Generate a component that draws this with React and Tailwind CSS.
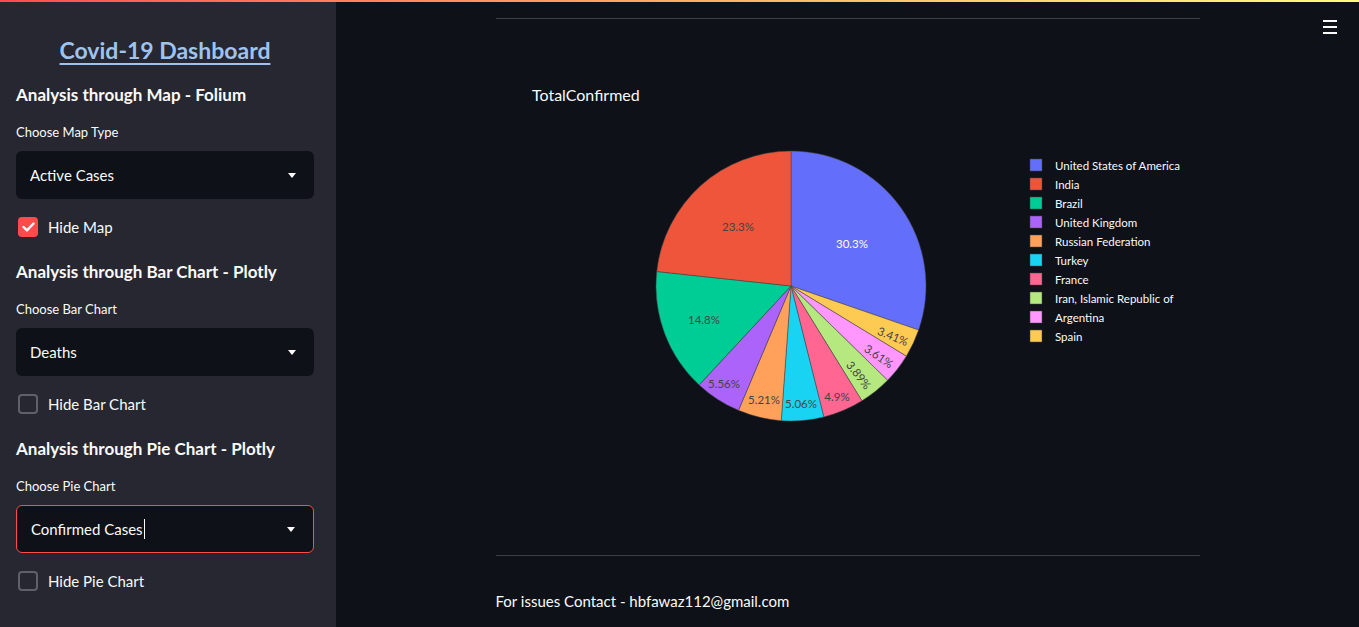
import { useState } from "react";

const slices = [
  { name: "United States of America", value: 30.3, color: "#636efa", label: "30.3%", lx: 356, ly: 224, rot: 0, light: true },
  { name: "Spain", value: 3.41, color: "#fecb52", label: "3.41%", lx: 397, ly: 317, rot: 22 },
  { name: "Argentina", value: 3.61, color: "#ff97ff", label: "3.61%", lx: 383, ly: 337, rot: 34 },
  { name: "Iran, Islamic Republic of", value: 3.89, color: "#b6e880", label: "3.89%", lx: 363, ly: 356, rot: 52 },
  { name: "France", value: 4.9, color: "#ff6692", label: "4.9%", lx: 341, ly: 377, rot: 0 },
  { name: "Turkey", value: 5.06, color: "#19d3f3", label: "5.06%", lx: 305, ly: 384, rot: 0 },
  { name: "Russian Federation", value: 5.21, color: "#ffa15a", label: "5.21%", lx: 268, ly: 380, rot: 0 },
  { name: "United Kingdom", value: 5.56, color: "#ab63fa", label: "5.56%", lx: 228, ly: 364, rot: 0 },
  { name: "Brazil", value: 14.8, color: "#00cc96", label: "14.8%", lx: 208, ly: 300, rot: 0 },
  { name: "India", value: 23.3, color: "#ef553b", label: "23.3%", lx: 242, ly: 207, rot: 0 },
];

const legend = [
  "United States of America",
  "India",
  "Brazil",
  "United Kingdom",
  "Russian Federation",
  "Turkey",
  "France",
  "Iran, Islamic Republic of",
  "Argentina",
  "Spain",
];

const FONT = "font-['Lato','Noto_Sans',sans-serif]";

function PieChart() {
  const cx = 295;
  const cy = 267;
  const r = 135;
  const total = slices.reduce((s, d) => s + d.value, 0);
  let acc = 0;
  const pt = (a) => [cx + r * Math.sin(a), cy - r * Math.cos(a)];
  return (
    <svg width="704" height="536" viewBox="0 0 704 536" className="block">
      <text x="36" y="82" fill="#fafafa" fontSize="16" fontFamily="Lato, 'Noto Sans', sans-serif">
        TotalConfirmed
      </text>
      {slices.map((s) => {
        const a0 = (acc / total) * Math.PI * 2;
        acc += s.value;
        const a1 = (acc / total) * Math.PI * 2;
        const [x0, y0] = pt(a0);
        const [x1, y1] = pt(a1);
        const large = a1 - a0 > Math.PI ? 1 : 0;
        return (
          <path
            key={s.name}
            d={`M${cx},${cy} L${x0},${y0} A${r},${r} 0 ${large} 1 ${x1},${y1} Z`}
            fill={s.color}
            stroke="#444"
            strokeWidth="0.5"
          />
        );
      })}
      {slices.map((s) => (
        <text
          key={s.label}
          x={s.lx}
          y={s.ly}
          textAnchor="middle"
          dominantBaseline="central"
          fontSize="11.5"
          fontFamily="Lato, 'Noto Sans', sans-serif"
          fill={s.light ? "#ffffff" : "#444444"}
          transform={s.rot ? `rotate(${s.rot} ${s.lx} ${s.ly})` : undefined}
        >
          {s.label}
        </text>
      ))}
      {legend.map((n, i) => {
        const c = slices.find((s) => s.name === n).color;
        const y = 146 + i * 19;
        return (
          <g key={n}>
            <rect x="534" y={y - 6} width="12" height="12" fill={c} stroke="#444" strokeWidth="0.5" />
            <text x="559" y={y} dominantBaseline="central" fontSize="11.5" fill="#fafafa" fontFamily="Lato, 'Noto Sans', sans-serif">
              {n}
            </text>
          </g>
        );
      })}
    </svg>
  );
}

function Select({ value, focused }) {
  return (
    <div
      className={`flex h-[48px] items-center justify-between rounded-md bg-[#0e1117] pl-[14px] pr-[18px] text-[15px] text-[#fafafa] ${
        focused ? "border border-[#ff4b4b]" : ""
      }`}
    >
      <span className="flex items-center">
        {value}
        {focused && <span className="ml-[1px] inline-block h-[20px] w-[1px] bg-[#fafafa]" />}
      </span>
      <svg width="8" height="5" viewBox="0 0 8 5">
        <path d="M0 0 L8 0 L4 5 Z" fill="#fafafa" />
      </svg>
    </div>
  );
}

function Check({ label, checked }) {
  const [on, setOn] = useState(checked);
  return (
    <div className="flex h-[24px] cursor-pointer items-center gap-[10px] pl-[2px]" onClick={() => setOn(!on)}>
      {on ? (
        <span className="flex h-[20px] w-[20px] items-center justify-center rounded-[4px] bg-[#ff4b4b]">
          <svg width="13" height="10" viewBox="0 0 13 10">
            <path d="M1.5 5 L5 8.3 L11.5 1.5" stroke="#fff" strokeWidth="2.4" fill="none" strokeLinecap="round" strokeLinejoin="round" />
          </svg>
        </span>
      ) : (
        <span className="h-[20px] w-[20px] rounded-[4px] border-2 border-[#5f6068]" />
      )}
      <span className="text-[15px] text-[#fafafa]">{label}</span>
    </div>
  );
}

function Section({ title, label, value, check, checked, focused, first }) {
  return (
    <div className={first ? "mt-[17px]" : "mt-[21px]"}>
      <h3 className="h-[24px] text-[17px] font-bold leading-[24px] text-[#fafafa]">{title}</h3>
      <p className="mt-[15px] h-[20px] text-[13px] leading-[20px] text-[#fafafa]">{label}</p>
      <div className="mt-[9px]">
        <Select value={value} focused={focused} />
      </div>
      <div className="mt-[16px]">
        <Check label={check} checked={checked} />
      </div>
    </div>
  );
}

export default function App() {
  return (
    <div className={`relative flex h-[627px] w-full overflow-hidden bg-[#0e1117] ${FONT}`}>
      <div className="absolute left-0 right-0 top-0 z-10 h-[2px] bg-gradient-to-r from-[#ff4b4b] to-[#fffd80]" />
      <aside className="h-full w-[336px] shrink-0 bg-[#262730] pl-[16px] pr-[22px] pt-[34px]">
        <h1 className="h-[32px] text-center text-[23px] font-bold leading-[32px] text-[#9fc3ef] underline underline-offset-[4px]">
          Covid-19 Dashboard
        </h1>
        <Section first title="Analysis through Map - Folium" label="Choose Map Type" value="Active Cases" check="Hide Map" checked />
        <Section title="Analysis through Bar Chart - Plotly" label="Choose Bar Chart" value="Deaths" check="Hide Bar Chart" />
        <Section title="Analysis through Pie Chart - Plotly" label="Choose Pie Chart" value="Confirmed Cases" check="Hide Pie Chart" focused />
      </aside>
      <main className="relative flex-1">
        <button className="absolute right-[22px] top-[20px] flex flex-col gap-[4px] p-0">
          <span className="block h-[2px] w-[14px] bg-[#fafafa]" />
          <span className="block h-[2px] w-[14px] bg-[#fafafa]" />
          <span className="block h-[2px] w-[14px] bg-[#fafafa]" />
        </button>
        <div className="mx-auto w-[704px] pt-[18px]">
          <div className="h-[1px] bg-[#3d4046]" />
          <PieChart />
          <div className="h-[1px] bg-[#3d4046]" />
          <p className="mt-[33px] text-[15px] leading-[24px] text-[#fafafa]">For issues Contact - hbfawaz112@gmail.com</p>
        </div>
      </main>
    </div>
  );
}
